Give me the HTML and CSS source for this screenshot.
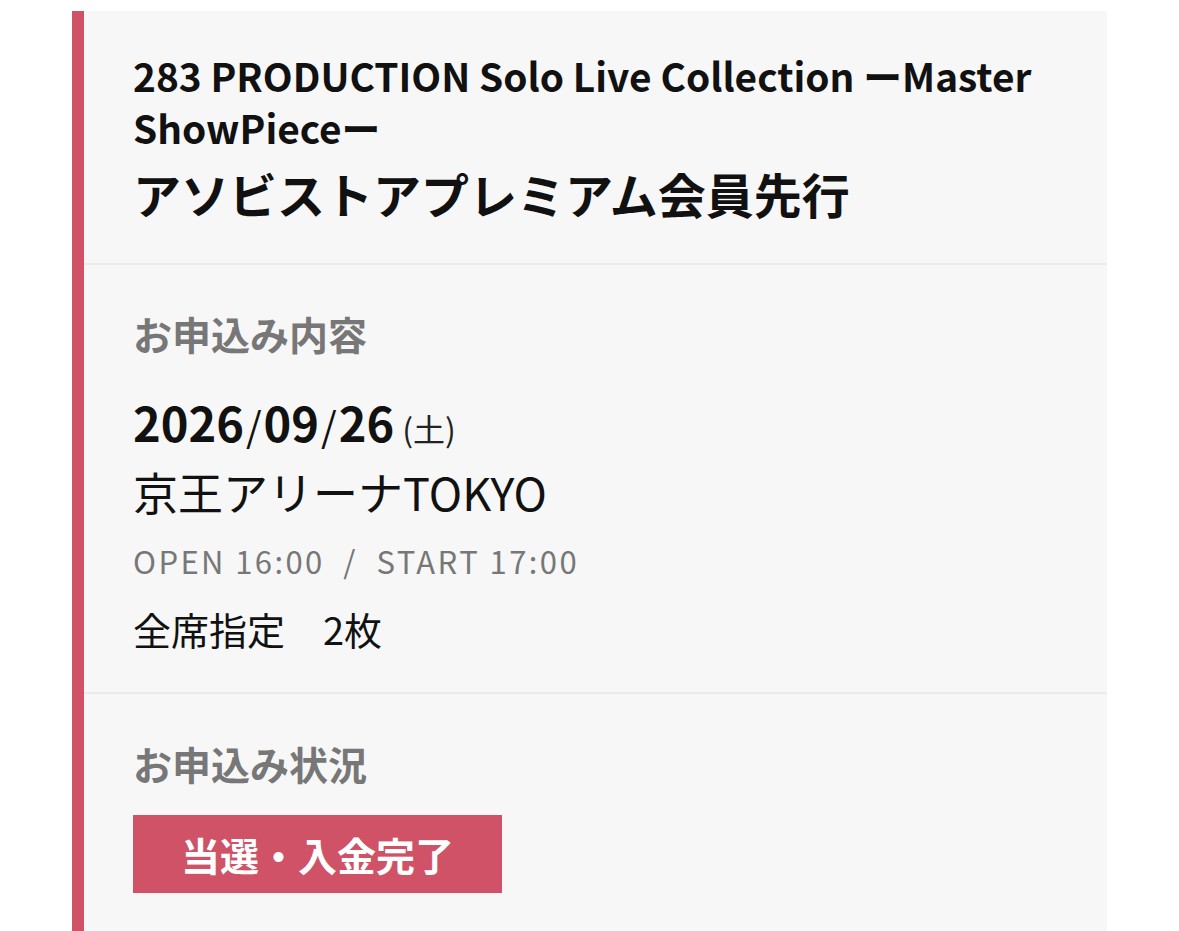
FILE: index.html
```html
<!DOCTYPE html>
<html lang="ja">
<head>
<meta charset="utf-8">
<link rel="stylesheet" href="styles.css">
</head>
<body>
<div class="card">
  <div class="head">
    <div class="event">283 PRODUCTION Solo Live Collection ーMaster ShowPieceー</div>
    <div class="sale">アソビストアプレミアム会員先行</div>
  </div>
  <div class="section detail">
    <div class="label">お申込み内容</div>
    <div class="date"><span class="num">2026</span><span class="sl">/</span><span class="num">09</span><span class="sl">/</span><span class="num">26</span><span class="dow">(土)</span></div>
    <div class="venue">京王アリーナTOKYO</div>
    <div class="time">OPEN 16:00 &nbsp;/&nbsp; START 17:00</div>
    <div class="seat">全席指定　2枚</div>
  </div>
  <div class="section status">
    <div class="label">お申込み状況</div>
    <div class="badge">当選・入金完了</div>
  </div>
</div>
</body>
</html>
```
FILE: styles.css
```css
html, body {
  margin: 0;
  padding: 0;
  background: #ffffff;
}
body {
  font-family: "Noto Sans CJK JP", "Noto Sans", sans-serif;
  color: #111111;
}
.card {
  margin: 11px 0 0 72px;
  width: 1023px;
  min-height: 940px;
  background: #f7f7f7;
  border-left: 12px solid #cf5266;
}
.head {
  padding: 38px 49px 38px;
}
.event {
  font-size: 38.8px;
  line-height: 52px;
  font-weight: 700;
  width: 920px;
}
.sale {
  margin-top: 8px;
  font-size: 48px;
  line-height: 64px;
  font-weight: 700;
}
.section {
  border-top: 2px solid #ebebeb;
  padding: 43px 49px 38px;
}
.label {
  font-size: 39px;
  line-height: 50px;
  font-weight: 700;
  color: #777777;
}
.date {
  margin-top: 34px;
  font-size: 47px;
  line-height: 60px;
  display: flex;
  align-items: baseline;
}
.date .num {
  font-weight: 700;
}
.date .sl {
  font-weight: 400;
  font-size: 40px;
  margin: 0 2px;
}
.date .dow {
  font-size: 32px;
  font-weight: 400;
  margin-left: 8px;
  color: #222222;
}
.venue {
  margin-top: 4px;
  font-size: 45px;
  line-height: 60px;
}
.time {
  margin-top: 17px;
  font-size: 31px;
  line-height: 44px;
  letter-spacing: 2.4px;
  color: #777777;
}
.seat {
  margin-top: 21px;
  font-size: 38px;
  line-height: 50px;
}
.status {
  padding-top: 44px;
}
.badge {
  margin-top: 27px;
  display: inline-block;
  background: #cf5266;
  color: #ffffff;
  font-size: 39px;
  font-weight: 700;
  line-height: 78px;
  padding: 0 48px;
}
```
